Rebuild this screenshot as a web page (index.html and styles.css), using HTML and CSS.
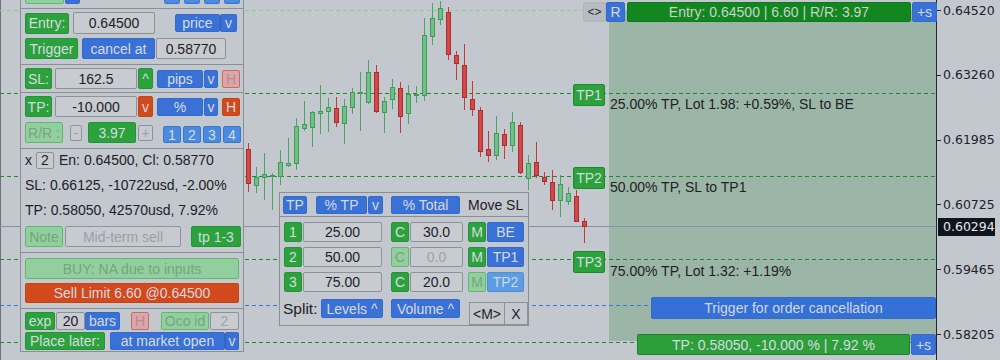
FILE: index.html
```html
<!DOCTYPE html>
<html>
<head>
<meta charset="utf-8">
<title>Trade panel</title>
<link rel="stylesheet" href="styles.css">
</head>
<body>
<div class="chart">
  <svg class="plot" width="1000" height="360" viewBox="0 0 1000 360">
    <rect class="zone" x="609" y="10" width="327" height="331"/>
    <line class="edge" x1="0.5" y1="0" x2="0.5" y2="360"/>
    <line class="ln-entry" x1="0" y1="10.5" x2="936" y2="10.5"/>
    <line class="ln-tp" x1="0" y1="93.5" x2="936" y2="93.5"/>
    <line class="ln-tp" x1="0" y1="176.5" x2="936" y2="176.5"/>
    <line class="ln-cur" x1="0" y1="226.5" x2="936" y2="226.5"/>
    <line class="ln-tp" x1="0" y1="259.5" x2="936" y2="259.5"/>
    <line class="ln-trig" x1="0" y1="305.5" x2="936" y2="305.5"/>
    <line class="ln-tp" x1="0" y1="342.5" x2="936" y2="342.5"/>

    <g class="dn"><line x1="248.5" y1="143" x2="248.5" y2="192"/><rect x="246.5" y="149.5" width="4" height="34"/></g>
    <g class="up"><line x1="256.5" y1="167" x2="256.5" y2="193"/><rect x="254.5" y="177.5" width="4" height="8"/></g>
    <g class="up"><line x1="264.5" y1="153" x2="264.5" y2="200"/><rect x="262.5" y="174.5" width="4" height="3"/></g>
    <g class="up"><line x1="272.5" y1="173" x2="272.5" y2="210"/><rect x="270.5" y="175.5" width="4" height="1"/></g>
    <g class="up"><line x1="280.5" y1="150" x2="280.5" y2="185"/><rect x="278.5" y="162.5" width="4" height="14"/></g>
    <g class="up"><line x1="288.5" y1="138" x2="288.5" y2="167"/><rect x="286.5" y="163.5" width="4" height="2"/></g>
    <g class="up"><line x1="296.5" y1="118" x2="296.5" y2="170"/><rect x="294.5" y="126.5" width="4" height="37"/></g>
    <g class="up"><line x1="304.5" y1="101" x2="304.5" y2="131"/><rect x="302.5" y="124.5" width="4" height="4"/></g>
    <g class="up"><line x1="312.5" y1="111" x2="312.5" y2="147"/><rect x="310.5" y="112.5" width="4" height="15"/></g>
    <g class="up"><line x1="320.5" y1="85" x2="320.5" y2="134"/><rect x="318.5" y="111.5" width="4" height="2"/></g>
    <g class="up"><line x1="328.5" y1="98" x2="328.5" y2="132"/><rect x="326.5" y="107.5" width="4" height="4"/></g>
    <g class="dn"><line x1="336.5" y1="97" x2="336.5" y2="127"/><rect x="334.5" y="108.5" width="4" height="14"/></g>
    <g class="up"><line x1="344.5" y1="99" x2="344.5" y2="144"/><rect x="342.5" y="106.5" width="4" height="17"/></g>
    <g class="up"><line x1="352.5" y1="88" x2="352.5" y2="114"/><rect x="350.5" y="92.5" width="4" height="15"/></g>
    <g class="up"><line x1="360.5" y1="72" x2="360.5" y2="131"/><rect x="358.5" y="92.5" width="4" height="1"/></g>
    <g class="up"><line x1="368.5" y1="60" x2="368.5" y2="104"/><rect x="366.5" y="72.5" width="4" height="30"/></g>
    <g class="dn"><line x1="376.5" y1="65" x2="376.5" y2="113"/><rect x="374.5" y="72.5" width="4" height="39"/></g>
    <g class="up"><line x1="384.5" y1="97" x2="384.5" y2="133"/><rect x="382.5" y="101.5" width="4" height="11"/></g>
    <g class="up"><line x1="392.5" y1="79" x2="392.5" y2="109"/><rect x="390.5" y="87.5" width="4" height="12"/></g>
    <g class="dn"><line x1="400.5" y1="82" x2="400.5" y2="133"/><rect x="398.5" y="88.5" width="4" height="28"/></g>
    <g class="up"><line x1="408.5" y1="85" x2="408.5" y2="124"/><rect x="406.5" y="94.5" width="4" height="19"/></g>
    <g class="up"><line x1="416.5" y1="86" x2="416.5" y2="103"/><rect x="414.5" y="94.5" width="4" height="1"/></g>
    <g class="up"><line x1="424.5" y1="18" x2="424.5" y2="101"/><rect x="422.5" y="35.5" width="4" height="60"/></g>
    <g class="up"><line x1="432.5" y1="3" x2="432.5" y2="45"/><rect x="430.5" y="18.5" width="4" height="18"/></g>
    <g class="up"><line x1="440.5" y1="1" x2="440.5" y2="25"/><rect x="438.5" y="8.5" width="4" height="11"/></g>
    <g class="dn"><line x1="448.5" y1="7" x2="448.5" y2="60"/><rect x="446.5" y="12.5" width="4" height="42"/></g>
    <g class="dn"><line x1="456.5" y1="51" x2="456.5" y2="80"/><rect x="454.5" y="55.5" width="4" height="8"/></g>
    <g class="dn"><line x1="464.5" y1="44" x2="464.5" y2="110"/><rect x="462.5" y="65.5" width="4" height="32"/></g>
    <g class="dn"><line x1="472.5" y1="81" x2="472.5" y2="116"/><rect x="470.5" y="99.5" width="4" height="10"/></g>
    <g class="dn"><line x1="480.5" y1="107" x2="480.5" y2="157"/><rect x="478.5" y="110.5" width="4" height="41"/></g>
    <g class="dn"><line x1="488.5" y1="131" x2="488.5" y2="162"/><rect x="486.5" y="149.5" width="4" height="6"/></g>
    <g class="up"><line x1="496.5" y1="116" x2="496.5" y2="160"/><rect x="494.5" y="133.5" width="4" height="22"/></g>
    <g class="dn"><line x1="504.5" y1="129" x2="504.5" y2="159"/><rect x="502.5" y="134.5" width="4" height="11"/></g>
    <g class="up"><line x1="512.5" y1="112" x2="512.5" y2="152"/><rect x="510.5" y="122.5" width="4" height="23"/></g>
    <g class="dn"><line x1="520.5" y1="122" x2="520.5" y2="174"/><rect x="518.5" y="125.5" width="4" height="47"/></g>
    <g class="up"><line x1="528.5" y1="155" x2="528.5" y2="190"/><rect x="526.5" y="163.5" width="4" height="15"/></g>
    <g class="dn"><line x1="536.5" y1="142" x2="536.5" y2="178"/><rect x="534.5" y="162.5" width="4" height="13"/></g>
    <g class="dn"><line x1="544.5" y1="172" x2="544.5" y2="185"/><rect x="542.5" y="177.5" width="4" height="4"/></g>
    <g class="dn"><line x1="552.5" y1="170" x2="552.5" y2="210"/><rect x="550.5" y="182.5" width="4" height="18"/></g>
    <g class="up"><line x1="560.5" y1="175" x2="560.5" y2="217"/><rect x="558.5" y="184.5" width="4" height="16"/></g>
    <g class="up"><line x1="568.5" y1="187" x2="568.5" y2="205"/><rect x="566.5" y="193.5" width="4" height="8"/></g>
    <g class="dn"><line x1="576.5" y1="190" x2="576.5" y2="222"/><rect x="574.5" y="196.5" width="4" height="25"/></g>
    <g class="dn"><line x1="584.5" y1="218" x2="584.5" y2="243"/><rect x="582.5" y="221.5" width="4" height="5"/></g>

    <line class="axis" x1="936.5" y1="0" x2="936.5" y2="360"/>
    <line class="tick" x1="936" y1="10.5" x2="941" y2="10.5"/>
    <line class="tick" x1="936" y1="75.5" x2="941" y2="75.5"/>
    <line class="tick" x1="936" y1="140.5" x2="941" y2="140.5"/>
    <line class="tick" x1="936" y1="204.5" x2="941" y2="204.5"/>
    <line class="tick" x1="936" y1="269.5" x2="941" y2="269.5"/>
    <line class="tick" x1="936" y1="334.5" x2="941" y2="334.5"/>
  </svg>

  <!-- price axis labels -->
  <div class="ax" style="top:3px">0.64520</div>
  <div class="ax" style="top:67px">0.63260</div>
  <div class="ax" style="top:132px">0.61985</div>
  <div class="ax" style="top:197px">0.60725</div>
  <div class="ax cur" style="top:218px">0.60294</div>
  <div class="ax" style="top:262px">0.59465</div>
  <div class="ax" style="top:327px">0.58205</div>

  <!-- entry bar -->
  <div class="entrybar">
    <span class="btn arrows">&lt;&gt;</span>
    <span class="btn b w19">R</span>
    <span class="btn dk w284 ml2">Entry: 0.64500 | 6.60 | R/R: 3.97</span>
    <span class="btn b w25 ml1">+s</span>
  </div>

  <!-- TP labels -->
  <span class="btn g tplabel tp1">TP1</span>
  <span class="btn g tplabel tp2">TP2</span>
  <span class="btn g tplabel tp3">TP3</span>
  <div class="tpnote n1">25.00% TP, Lot 1.98: +0.59%, SL to BE</div>
  <div class="tpnote n2">50.00% TP, SL to TP1</div>
  <div class="tpnote n3">75.00% TP, Lot 1.32: +1.19%</div>

  <div class="btn b trigbar">Trigger for order cancellation</div>

  <div class="tpbar">
    <span class="btn g2 w273">TP: 0.58050, -10.000 % | 7.92 %</span>
    <span class="btn b w25 ml1">+s</span>
  </div>

  <!-- left panel -->
  <div class="panel">
    <div class="sec s0">
      <div class="row h19">
        <span class="btn gd w39"></span>
        <span class="btn b w15 ml1"></span>
        <span class="btn b2 w16 ml84"></span>
        <span class="btn b2 w16 ml4"></span>
        <span class="btn b2 w16 ml4"></span>
        <span class="btn b2 w16 ml4"></span>
      </div>
    </div>

    <div class="sec s1">
      <div class="row h22">
        <span class="btn g w44">Entry:</span>
        <span class="inp w82 h22 ml4">0.64500</span>
        <span class="btn b w45 h18 ml20">price</span>
        <span class="btn b sep w17 h18">v</span>
      </div>
      <div class="row h21 mt4">
        <span class="btn g w53">Trigger</span>
        <span class="btn b w73 ml4">cancel at</span>
        <span class="inp w70 ml1">0.58770</span>
      </div>
    </div>

    <div class="sec s2">
      <div class="row h21">
        <span class="btn g w27">SL:</span>
        <span class="inp w82 ml3">162.5</span>
        <span class="btn g w15 ml1">^</span>
        <span class="btn b w46 h18 ml4">pips</span>
        <span class="btn b w14 h18 ml1">v</span>
        <span class="btn hd w18 h18 ml4">H</span>
      </div>
    </div>

    <div class="sec s3">
      <div class="row h21">
        <span class="btn g w27">TP:</span>
        <span class="inp w82 ml3">-10.000</span>
        <span class="btn r w15 ml1">v</span>
        <span class="btn b w46 h18 ml4">%</span>
        <span class="btn b w14 h18 ml1">v</span>
        <span class="btn r w18 h18 ml4">H</span>
      </div>
      <div class="row h21 mt5">
        <span class="btn gd w38">R/R :</span>
        <span class="btn gray w12 h16 ml7">-</span>
        <span class="btn g w48 ml6">3.97</span>
        <span class="btn gray w15 h16 ml2">+</span>
        <span class="btn b2 w18 h17 ml10 low">1</span>
        <span class="btn b2 w18 h17 ml2 low">2</span>
        <span class="btn b2 w18 h17 ml2 low">3</span>
        <span class="btn b2 w18 h17 ml2 low">4</span>
      </div>
    </div>

    <div class="sec s4">
      <div class="info"><span>x</span><span class="cnt ml4">2</span><span class="ml5">En: 0.64500, Cl: 0.58770</span></div>
      <div class="info mt5">SL: 0.66125, -10722usd, -2.00%</div>
      <div class="info mt5">TP: 0.58050, 42570usd, 7.92%</div>
      <div class="row h21 mt6">
        <span class="btn gd w38">Note</span>
        <span class="btn gray w116 ml2">Mid-term sell</span>
        <span class="btn g w50 ml10">tp 1-3</span>
      </div>
    </div>

    <div class="sec s5">
      <div class="row h21"><span class="btn gd w214">BUY: NA due to inputs</span></div>
      <div class="row h20 mt4"><span class="btn r w214 h20">Sell Limit 6.60 @0.64500</span></div>
    </div>

    <div class="sec s6">
      <div class="row h18">
        <span class="btn g w30 h18">exp</span>
        <span class="inp w29 h18 ml1">20</span>
        <span class="btn b w35 h18">bars</span>
        <span class="btn hd w18 h18 ml11">H</span>
        <span class="btn gd w48 h18 ml12">Oco id</span>
        <span class="inp dim w29 h18 ml1">2</span>
      </div>
      <div class="row h18 mt2">
        <span class="btn g w80 h18">Place later:</span>
        <span class="btn b w115 h18 ml5">at market open</span>
        <span class="btn b sep w14 h18">v</span>
      </div>
    </div>
  </div>

  <!-- TP split panel -->
  <div class="tpp">
    <div class="tph">
      <span class="btn b w24 h18">TP</span>
      <span class="btn b w51 h18 ml9">% TP</span>
      <span class="btn b w15 h18 ml1">v</span>
      <span class="btn b w69 h18 ml8">% Total</span>
      <span class="lbl ml8">Move SL</span>
    </div>
    <div class="tpb">
      <div class="row h20">
        <span class="btn g w18 h20">1</span>
        <span class="inp w79 h20 ml1">25.00</span>
        <span class="btn g w18 h20 ml9">C</span>
        <span class="inp w53 h20 ml1">30.0</span>
        <span class="btn g w18 h20 ml5">M</span>
        <span class="btn b w37 h20 ml1">BE</span>
      </div>
      <div class="row h20 mt5">
        <span class="btn g w18 h20">2</span>
        <span class="inp w79 h20 ml1">50.00</span>
        <span class="btn gd w18 h20 ml9">C</span>
        <span class="inp dim w53 h20 ml1">0.0</span>
        <span class="btn g w18 h20 ml5">M</span>
        <span class="btn b w37 h20 ml1">TP1</span>
      </div>
      <div class="row h20 mt5">
        <span class="btn g w18 h20">3</span>
        <span class="inp w79 h20 ml1">75.00</span>
        <span class="btn g w18 h20 ml9">C</span>
        <span class="inp w53 h20 ml1">20.0</span>
        <span class="btn gd w18 h20 ml5">M</span>
        <span class="btn bl w37 h20 ml1">TP2</span>
      </div>
      <div class="row split mt5">
        <span class="splitlbl">Split:</span>
        <span class="btn b w62 h19 ml4 top2">Levels ^</span>
        <span class="btn b w69 h19 ml8 top2">Volume ^</span>
        <span class="mbtn ml9">&lt;M&gt;</span>
        <span class="mbtn xbtn">X</span>
      </div>
    </div>
  </div>
</div>
</body>
</html>
```

FILE: styles.css
```css
* { box-sizing: border-box; }
html, body { margin: 0; padding: 0; }
body {
  width: 1000px;
  height: 360px;
  overflow: hidden;
  background: #c3c7ce;
  font-family: "Liberation Sans", Arial, sans-serif;
  font-size: 14px;
  color: #1d2126;
}
.chart { position: relative; width: 1000px; height: 360px; overflow: hidden; }
.plot { position: absolute; left: 0; top: 0; }

/* svg */
.zone { fill: #9bb5a6; }
.edge { stroke: #6d7279; stroke-width: 1; }
.ln-entry { stroke: #86d286; stroke-width: 1; stroke-dasharray: 4 3; }
.ln-tp { stroke: #23872e; stroke-width: 1; stroke-dasharray: 4 3; }
.ln-trig { stroke: #3b73d6; stroke-width: 1; stroke-dasharray: 4 3; }
.ln-cur { stroke: #8592a4; stroke-width: 1; }
.axis { stroke: #23272d; stroke-width: 1; }
.tick { stroke: #23272d; stroke-width: 1; }
.up line { stroke: #48a660; stroke-width: 1; }
.up rect { fill: #6fc184; stroke: #3f9c56; stroke-width: 1; }
.dn line { stroke: #c83838; stroke-width: 1; }
.dn rect { fill: #d04a4a; stroke: #b02c2c; stroke-width: 1; }

/* axis labels */
.ax {
  position: absolute;
  left: 943px;
  font-family: "DejaVu Sans", sans-serif;
  font-size: 12.5px;
  line-height: 16px;
  color: #1e2228;
}
.ax.cur {
  left: 938px;
  width: 57px;
  height: 18px;
  line-height: 18px;
  padding-left: 5px;
  background: #0f151d;
  color: #e6e8ea;
}

/* generic buttons */
.btn {
  display: flex;
  align-items: center;
  justify-content: center;
  flex: none;
  height: 21px;
  border: 1px solid transparent;
  border-radius: 2px;
  color: #d6dbe0;
  white-space: nowrap;
  line-height: 1;
}
.g { background: #2ba23b; border-color: #24943a; }
.g2 { background: #2c9f3a; border-color: #1f7e2b; }
.dk { background: #12861f; border-color: #0f7a1b; color: #c9d2cc; }
.b { background: #3a71d7; border-color: #3469cd; }
.b2 { background: #4a8be0; border-color: #3a78d0; }
.bl { background: #5b9ce2; border-color: #4d8fd8; color: #cdd9e6; }
.r { background: #d2491b; border-color: #c64318; }
.gd { background: #93cf9e; border-color: #5fba6f; color: #72a67e; }
.hd { background: #d6a7ab; border-color: #d4665c; color: #c0888e; }
.gray { background: #c7cad0; border-color: #8f939a; color: #9aa0a7; }
.sep { border-left-color: #2d5fbf; }

.inp {
  display: flex;
  align-items: center;
  justify-content: center;
  flex: none;
  height: 21px;
  background: #c8cbd0;
  border: 1px solid #8d9198;
  border-radius: 2px;
  color: #1d2126;
  white-space: nowrap;
}
.inp.dim { color: #9ea3aa; }

/* sizes */
.w12 { width: 12px; } .w14 { width: 14px; } .w15 { width: 15px; } .w16 { width: 16px; }
.w17 { width: 17px; } .w18 { width: 18px; } .w19 { width: 19px; } .w24 { width: 24px; }
.w25 { width: 25px; } .w27 { width: 27px; } .w29 { width: 29px; } .w30 { width: 30px; }
.w35 { width: 35px; } .w37 { width: 37px; } .w38 { width: 38px; } .w39 { width: 39px; }
.w44 { width: 44px; } .w45 { width: 45px; } .w46 { width: 46px; } .w48 { width: 48px; }
.w50 { width: 50px; } .w51 { width: 51px; } .w53 { width: 53px; } .w62 { width: 62px; }
.w69 { width: 69px; } .w70 { width: 70px; } .w73 { width: 73px; } .w79 { width: 79px; }
.w80 { width: 80px; } .w82 { width: 82px; } .w115 { width: 115px; } .w116 { width: 116px; }
.w214 { width: 214px; } .w273 { width: 273px; } .w284 { width: 284px; }
.h16 { height: 16px; } .h17 { height: 17px; } .h18 { height: 18px; } .h19 { height: 19px; }
.h20 { height: 20px; } .h21 { height: 21px; } .h22 { height: 22px; }
.ml1 { margin-left: 1px; } .ml2 { margin-left: 2px; } .ml3 { margin-left: 3px; }
.ml4 { margin-left: 4px; } .ml5 { margin-left: 5px; } .ml6 { margin-left: 6px; }
.ml7 { margin-left: 7px; } .ml8 { margin-left: 8px; } .ml9 { margin-left: 9px; }
.ml10 { margin-left: 10px; } .ml11 { margin-left: 11px; } .ml12 { margin-left: 12px; }
.ml20 { margin-left: 20px; } .ml84 { margin-left: 84px; }
.mt2 { margin-top: 2px; } .mt4 { margin-top: 4px; } .mt5 { margin-top: 5px; } .mt6 { margin-top: 6px; }

.row { display: flex; align-items: center; flex: none; }
.low { align-self: flex-end; }
.top2 { align-self: flex-start; margin-top: 2px; }

/* chart overlays */
.entrybar {
  position: absolute;
  left: 583px;
  top: 2px;
  height: 20px;
  display: flex;
}
.entrybar .btn { height: 20px; }
.arrows {
  width: 23px;
  background: #b7bbc2;
  border-color: #b0b4bb;
  color: #2a2e34;
  font-size: 12px;
}
.tplabel {
  position: absolute;
  left: 573px;
  width: 32px;
  height: 22px;
  border-color: #1d8a2c;
}
.tp1 { top: 84px; }
.tp2 { top: 167px; }
.tp3 { top: 251px; }
.tpnote {
  position: absolute;
  left: 610px;
  line-height: 16px;
  color: #1e2226;
  white-space: nowrap;
}
.n1 { top: 96px; }
.n2 { top: 179px; }
.n3 { top: 263px; }
.trigbar {
  position: absolute;
  left: 651px;
  top: 297px;
  width: 285px;
  height: 22px;
  background: #3570d6;
  color: #cfd8e6;
}
.tpbar {
  position: absolute;
  left: 637px;
  top: 334px;
  height: 21px;
  display: flex;
}

/* left panel */
.panel {
  position: absolute;
  left: 20px;
  top: -25px;
  width: 224px;
  display: flex;
  flex-direction: column;
  background: #c3c7ce;
  border: 1px solid #8a8e95;
  border-top: none;
}
.sec {
  display: flex;
  flex-direction: column;
  padding-left: 4px;
  border-bottom: 1px solid #8a8e95;
}
.s0 { height: 34px; padding-top: 9px; }
.s1 { height: 56px; padding-top: 3px; }
.s2 { height: 28px; padding-top: 3px; }
.s3 { height: 56px; padding-top: 3px; }
.s4 { height: 104px; padding-top: 1px; }
.s5 { height: 56px; padding-top: 5px; }
.s6 { height: 42px; padding-top: 3px; border-bottom: none; }

.info {
  display: flex;
  align-items: center;
  height: 20px;
  white-space: nowrap;
  color: #1d2126;
}
.cnt {
  display: flex;
  align-items: center;
  justify-content: center;
  width: 18px;
  height: 17px;
  background: #c8cbd0;
  border: 1px solid #8d9198;
  border-radius: 2px;
}

/* TP split panel */
.tpp {
  position: absolute;
  left: 279px;
  top: 192px;
  width: 250px;
  height: 134px;
  display: flex;
  flex-direction: column;
  background: #c3c7ce;
  border: 1px solid #8a8e95;
}
.tph {
  display: flex;
  align-items: center;
  height: 24px;
  padding-left: 3px;
  border-bottom: 1px solid #8a8e95;
}
.lbl { color: #1d2126; white-space: nowrap; }
.tpb {
  display: flex;
  flex-direction: column;
  padding: 5px 0 0 4px;
  flex: 1;
}
.split { height: 27px; align-items: stretch; }
.splitlbl {
  width: 34px;
  margin-left: -1px;
  align-self: flex-start;
  margin-top: 3px;
  font-size: 15.5px;
  line-height: 18px;
  color: #1d2126;
}
.mbtn {
  display: flex;
  align-items: center;
  justify-content: center;
  align-self: flex-end;
  width: 36px;
  height: 23px;
  margin-bottom: -1px;
  background: #c4c7cd;
  border: 1px solid #8d9198;
  color: #1d2126;
  font-size: 14px;
}
.xbtn { width: 23px; border-left: none; }
```
